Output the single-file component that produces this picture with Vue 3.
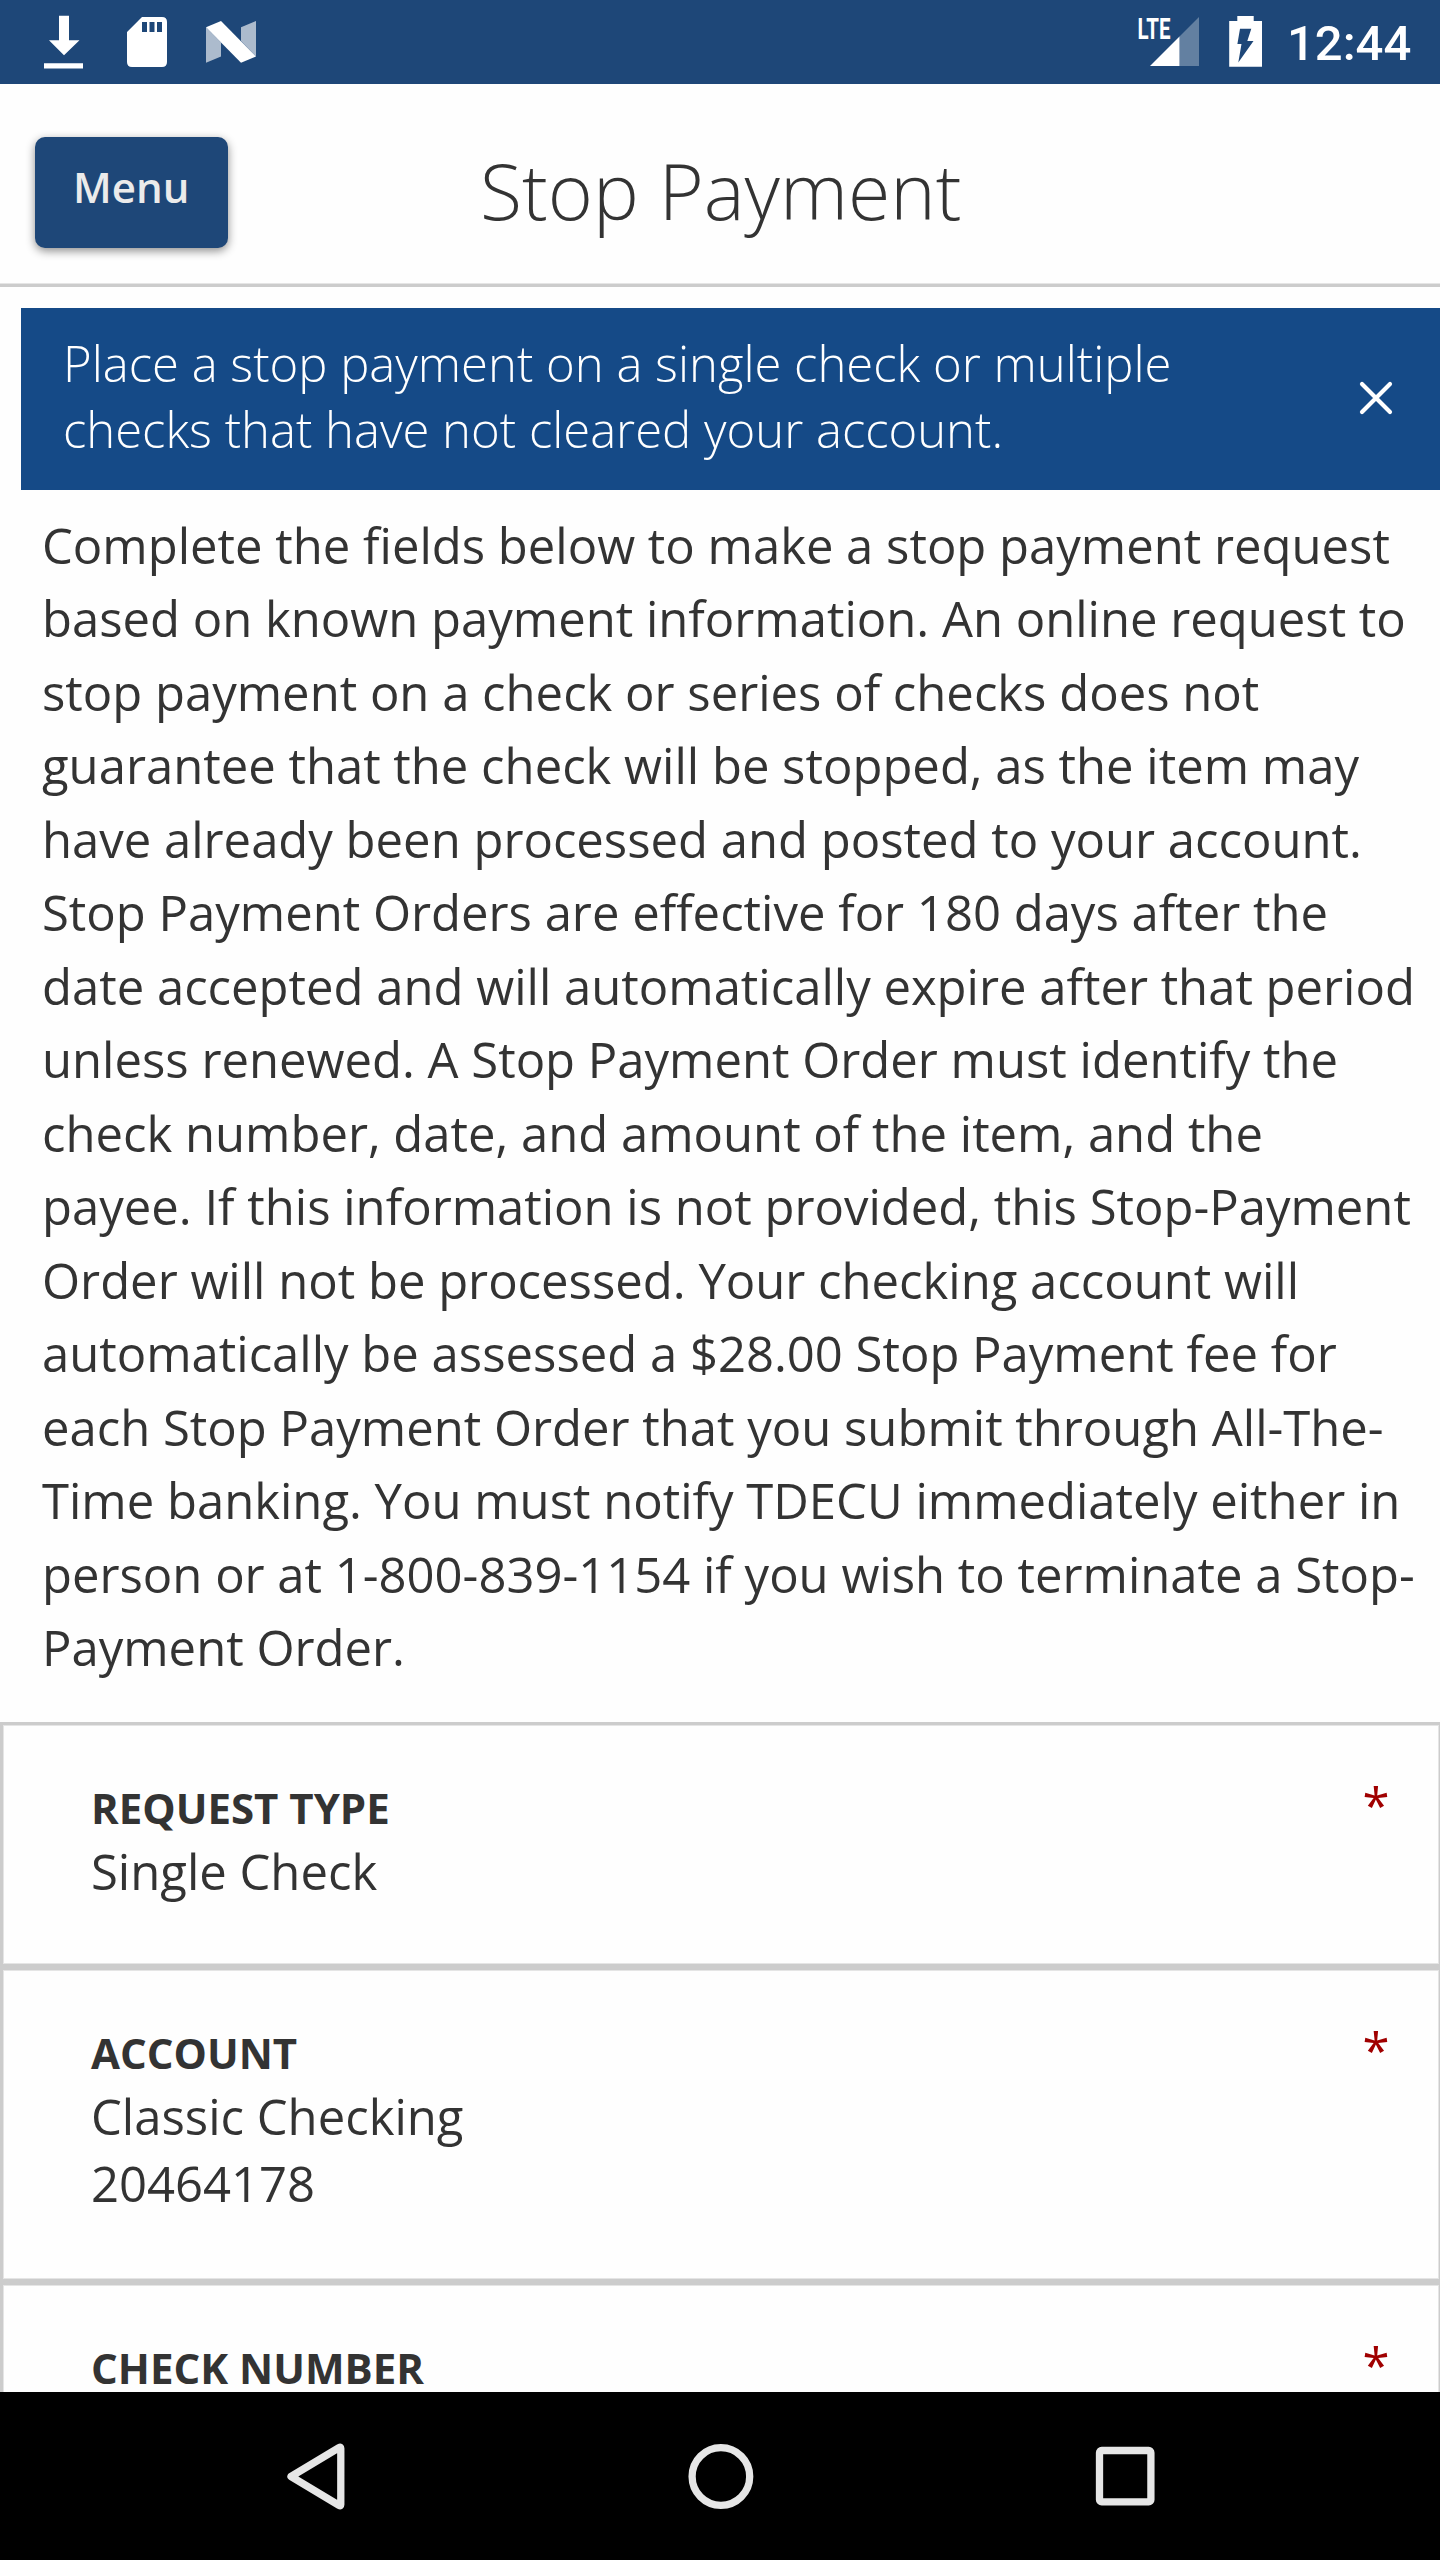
<script setup>
const description = [
  'Complete the fields below to make a stop payment request',
  'based on known payment information. An online request to',
  'stop payment on a check or series of checks does not',
  'guarantee that the check will be stopped, as the item may',
  'have already been processed and posted to your account.',
  'Stop Payment Orders are effective for 180 days after the',
  'date accepted and will automatically expire after that period',
  'unless renewed. A Stop Payment Order must identify the',
  'check number, date, and amount of the item, and the',
  'payee. If this information is not provided, this Stop-Payment',
  'Order will not be processed. Your checking account will',
  'automatically be assessed a $28.00 Stop Payment fee for',
  'each Stop Payment Order that you submit through All-The-',
  'Time banking. You must notify TDECU immediately either in',
  'person or at 1-800-839-1154 if you wish to terminate a Stop-',
  'Payment Order.',
].join('\n')

const fields = [
  { label: 'REQUEST TYPE', values: ['Single Check'], size: 'short' },
  { label: 'ACCOUNT', values: ['Classic Checking', '20464178'], size: 'tall' },
  { label: 'CHECK NUMBER', values: [], size: 'last' },
]
</script>

<template>
  <div class="screen">
    <div class="status">
      <svg class="notices" width="300" height="84" viewBox="0 0 300 84" fill="#fff">
        <path d="M59 15.7h10V40.3h10.5L64 55.2 49 40.3h10zM44 63.3h39v5.2H44z" />
        <path fill-rule="evenodd" d="M142 17h20q5 0 5 5v40q0 5-5 5h-30q-5 0-5-5V32zM142 22v10h5V22zM149.5 22v10h5V22zM157 22v10h5V22z" />
        <path fill-opacity=".63" d="M206 27.3 221 42.5V56.5L206 62.7zM241 27.3 256 21V56.4L241 41z" />
        <path d="M206 27.3 221 21 256 56.4 241 62.7z" />
      </svg>
      <div class="system">
        <svg width="180" height="84" viewBox="1100 0 180 84" fill="#fff">
          <text class="lte" x="1137.5" y="39" textLength="33" lengthAdjust="spacingAndGlyphs">LTE</text>
          <path fill-opacity=".31" d="M1179.5 36.5 1199 17V66H1179.5z" />
          <path d="M1150 66 1179.5 36.5V66z" />
          <path fill-rule="evenodd" d="M1237.3 16h16.4v5h8.3v45.7h-32.8V21h8.1zM1240 28.7 1237.4 44H1241.5L1238.3 62.5 1253.5 41H1247.3L1251.3 28.7z" />
        </svg>
        <span class="clock">12:44</span>
      </div>
    </div>

    <header class="header">
      <button class="menu">Menu</button>
      <h1 class="title">Stop Payment</h1>
      <span class="spacer"></span>
    </header>

    <main class="content">
      <section class="banner">
        <p class="banner-text">Place a stop payment on a single check or multiple<br />checks that have not cleared your account.</p>
        <svg class="close" width="34" height="34" viewBox="0 0 34 34">
          <path d="M3 3 31 31M31 3 3 31" stroke="#fff" stroke-width="4.2" stroke-linecap="round" />
        </svg>
      </section>

      <p class="description">{{ description }}</p>

      <section v-for="field in fields" :key="field.label" class="field" :class="field.size">
        <div>
          <div class="label">{{ field.label }}</div>
          <div v-for="value in field.values" :key="value" class="value">{{ value }}</div>
        </div>
        <span class="required">*</span>
      </section>
    </main>

    <nav class="nav">
      <svg width="70" height="70" viewBox="0 0 70 70">
        <path d="M10 35.5 58.3 6.5Q59.8 5.5 59.8 7.5V63.5Q59.8 65.5 58.3 64.5Z" />
      </svg>
      <svg width="70" height="70" viewBox="0 0 70 70">
        <circle cx="34.9" cy="35.5" r="28.8" />
      </svg>
      <svg width="70" height="70" viewBox="0 0 70 70">
        <rect x="9.5" y="9.5" width="51.4" height="51.4" rx="2.2" />
      </svg>
    </nav>
  </div>
</template>

<style>
body {
  margin: 0;
}
</style>

<style scoped>
.screen {
  width: 1440px;
  height: 2560px;
  display: flex;
  flex-direction: column;
  overflow: hidden;
  background: #fefefe;
  color: #333;
  font-family: "Open Sans", sans-serif;
}
.status {
  height: 84px;
  flex: none;
  display: flex;
  justify-content: space-between;
  background: #1e4778;
}
.system {
  display: flex;
  width: 340px;
}
.lte {
  font: 700 29.5px Roboto, sans-serif;
}
.clock {
  margin-left: 7px;
  font: 500 49px/88px Roboto, sans-serif;
  color: #fff;
}
.header {
  box-sizing: border-box;
  height: 203px;
  flex: none;
  display: flex;
  align-items: flex-start;
  border-bottom: 3px solid #ccc;
  box-shadow: inset 0 -1px #e5e5e5;
}
.menu {
  width: 192.5px;
  height: 111.5px;
  margin: 52.5px 0 0 35px;
  padding: 0 0 12px;
  border: 0;
  border-radius: 10px;
  background: #1e4778;
  color: #ebebeb;
  font: 600 42px "Open Sans", sans-serif;
  box-shadow: 0 3px 10px rgba(0, 0, 0, .45);
}
.title {
  flex: 1;
  margin: 54px 0 0;
  text-align: center;
  font-size: 77px;
  line-height: 106px;
  font-weight: 300;
}
.spacer {
  width: 226px;
}
.content {
  flex: 1;
  min-height: 0;
  overflow: hidden;
}
.banner {
  box-sizing: border-box;
  display: flex;
  justify-content: space-between;
  height: 182px;
  margin: 21px 0 0 21px;
  padding: 22px 47px 0 42px;
  background: #154a87;
  color: #fff;
}
.banner-text {
  margin: 0;
  font-size: 49px;
  line-height: 66px;
  font-weight: 300;
  white-space: nowrap;
}
.close {
  margin-top: 51px;
}
.description {
  margin: 18.5px 0 37.5px 42px;
  font-size: 49px;
  line-height: 73.5px;
  white-space: pre;
}
.field {
  box-sizing: border-box;
  width: 1442px;
  padding: 54px 49.5px 0 88px;
  display: flex;
  justify-content: space-between;
  border: 3px solid #ccc;
  box-shadow: inset 0 0 0 1px #e5e5e5;
}
.short {
  height: 245px;
}
.tall {
  height: 315px;
}
.last {
  height: 245px;
}
.label {
  margin-bottom: 2px;
  font-size: 42px;
  line-height: 57px;
  font-weight: 700;
}
.value {
  font-size: 49px;
  line-height: 67px;
}
.required {
  font-size: 49px;
  line-height: 67px;
  margin-top: -7px;
  color: #a00000;
}
.nav {
  height: 168px;
  flex: none;
  display: flex;
  align-items: center;
  justify-content: space-between;
  box-sizing: border-box;
  padding: 0 280px 0 281px;
  background: #000;
}
.nav svg {
  fill: none;
  stroke: #e6e6e6;
  stroke-width: 7.3;
  stroke-linejoin: round;
}
</style>
